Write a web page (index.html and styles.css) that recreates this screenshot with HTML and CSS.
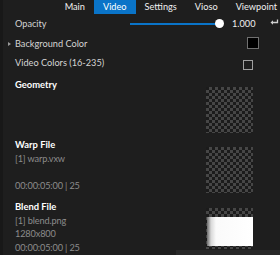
FILE: index.html
```html
<!DOCTYPE html>
<html lang="en">
<head>
    <meta charset="UTF-8">
    <title>Video Properties</title>
    <link rel="stylesheet" href="styles.css">
</head>
<body>

    <!-- Tab strip -->
    <nav class="tabs">
        <span class="tab">Main</span>
        <span class="tab active">Video</span>
        <span class="tab">Settings</span>
        <span class="tab">Vioso</span>
        <span class="tab">Viewpoint</span>
    </nav>

    <div class="panel">
        <!-- Properties -->
        <div class="row opacity">
            <span class="label">Opacity</span>
            <div class="slider"><div class="track"></div><div class="knob"></div></div>
            <span class="value">1.000</span>
            <svg class="reset" width="9" height="7" viewBox="0 0 9 7">
                <path d="M7.5 0.5 V3.5 H2.5" fill="none" stroke="#d0d0d0" stroke-width="1.3"/>
                <path d="M0.5 3.5 L3 1.2 V5.8 Z" fill="#d0d0d0"/>
            </svg>
        </div>
        <div class="row">
            <span class="arrow"></span>
            <span class="label">Background Color</span>
            <span class="swatch"></span>
        </div>
        <div class="row">
            <span class="label">Video Colors (16-235)</span>
            <span class="check"></span>
        </div>

        <!-- Geometry -->
        <div class="section geometry">
            <div class="info">
                <div class="title">Geometry</div>
            </div>
            <div class="thumb checker"></div>
        </div>

        <!-- Warp file -->
        <div class="section warp">
            <div class="info">
                <div class="title">Warp File</div>
                <div class="sub">[1] warp.vxw</div>
                <div class="sub">&nbsp;</div>
                <div class="sub">00:00:05:00 | 25</div>
            </div>
            <div class="thumb checker"></div>
        </div>

        <!-- Blend file -->
        <div class="section blend">
            <div class="info">
                <div class="title">Blend File</div>
                <div class="sub">[1] blend.png</div>
                <div class="sub">1280x800</div>
                <div class="sub">00:00:05:00 | 25</div>
            </div>
            <div class="thumb checker short">
                <div class="blend-img"></div>
            </div>
        </div>
    </div>

    <div class="footer-bar"></div>
</body>
</html>
```

FILE: styles.css
```css
body {
    margin: 0;
    width: 280px;
    height: 255px;
    overflow: hidden;
    background-color: #1e1e1e;
    color: #d4d4d4;
    font-family: Lato, "Open Sans", sans-serif;
    font-size: 9.2px;
    position: relative;
    border-left: 3px solid #181818;
    box-sizing: border-box;
}

.tabs {
    display: flex;
    justify-content: flex-end;
    height: 14px;
    line-height: 13px;
    color: #f0f0f0;
}

.tab {
    padding: 0 9px;
}

.tab:last-child {
    padding-right: 3px;
}

.tab.active {
    background-color: #0a74c8;
    color: #fff;
}

.panel {
    padding-left: 12px;
}

.row {
    display: flex;
    align-items: center;
    height: 19.5px;
    position: relative;
}

.row.opacity {
    display: grid;
    grid-template-columns: 115px 94px auto auto;
    align-items: center;
}

.arrow {
    position: absolute;
    left: -7px;
    top: 8px;
    border-left: 3px solid #999;
    border-top: 2.5px solid transparent;
    border-bottom: 2.5px solid transparent;
}

.slider {
    position: relative;
    height: 9px;
}

.track {
    position: absolute;
    left: 0;
    right: 4px;
    top: 4px;
    height: 2px;
    background-color: #0a74c8;
}

.knob {
    position: absolute;
    right: 0;
    top: 0;
    width: 9px;
    height: 9px;
    border-radius: 50%;
    background-color: #fff;
}

.value {
    margin-left: 8px;
    color: #f0f0f0;
}

.reset {
    margin-left: 13px;
    margin-top: -2px;
}

.swatch {
    margin-left: auto;
    margin-right: 21px;
    width: 10px;
    height: 10px;
    background-color: #000;
    border: 1px solid #707070;
}

.check {
    margin-left: auto;
    margin-right: 27px;
    width: 8px;
    height: 8px;
    border: 1px solid #a0a0a0;
    margin-top: 4px;
}

.section {
    display: flex;
}

.geometry {
    margin-top: 5px;
    height: 60px;
}

.warp {
    height: 62px;
}

.info {
    flex: 1;
}

.title {
    color: #fff;
    font-weight: bold;
    font-size: 9.4px;
    line-height: 14px;
}

.sub {
    color: #8c8c8c;
    line-height: 13.6px;
    letter-spacing: -0.15px;
}

.thumb {
    width: 47px;
    height: 46px;
    margin-top: 9px;
    margin-right: 27px;
}

.checker {
    background-color: #1b1b1b;
    background-image:
        linear-gradient(45deg, #464646 25%, transparent 25%, transparent 75%, #464646 75%),
        linear-gradient(45deg, #464646 25%, transparent 25%, transparent 75%, #464646 75%);
    background-size: 6px 6px;
    background-position: 0 0, 3px 3px;
}

.thumb.short {
    height: 41px;
    margin-top: 8px;
    padding-top: 9px;
    box-sizing: border-box;
}

.blend-img {
    height: 29px;
    margin-left: 1px;
    background: linear-gradient(90deg, #6a6a6a 0, #d8d8d8 4px, #fafafa 9px, #fff 100%);
}

.footer-bar {
    position: absolute;
    left: 173px;
    right: 0;
    bottom: 0;
    height: 5px;
    background-color: #282828;
}
```
